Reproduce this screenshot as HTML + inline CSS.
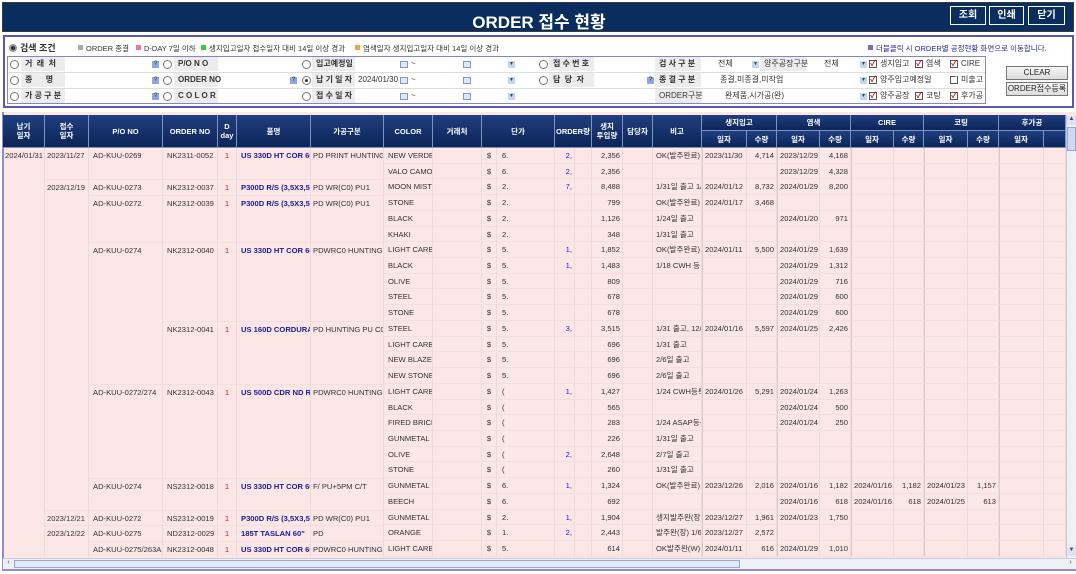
<!DOCTYPE html>
<html><head><meta charset="utf-8">
<style>
*{margin:0;padding:0;box-sizing:border-box}
body{width:1076px;height:574px;background:#fff;font-family:"Liberation Sans","Noto Sans CJK KR",sans-serif;position:relative;overflow:hidden;color:#333}
.a{position:absolute}
#title{left:2px;top:2px;width:1072px;height:30px;background:#0a2d60;border:1px solid #3a3a3a}
#title .t{left:0;width:1072px;top:5px;text-align:center;color:#fff;font-weight:bold;font-size:17px}
.btn{top:6px;height:19px;border:1px solid #fff;outline:1px solid #0a2d60;background:#0a2d60;color:#fff;font-size:10px;font-weight:bold;text-align:center;line-height:17px}
#sp{left:3px;top:35px;width:1071px;height:73px;border:2px solid #5a58b0}
.lg{font-size:7.5px;top:43px;color:#333;white-space:nowrap}
.sq{display:inline-block;width:5px;height:5px;margin-right:3px;vertical-align:1px}
#grid{left:7px;top:56px;width:979px;height:48px;border:1px solid #8684c8;background:#fff}
.lab{background:#ececec;font-size:8px;font-weight:bold;color:#333;height:14px;line-height:14px;padding-left:4px;white-space:nowrap}
.f{font-size:8px;color:#333;line-height:14px;white-space:nowrap}
.rad{width:9px;height:9px;border:1px solid #777;border-radius:50%;background:#fff}
.rad.on::after{content:"";position:absolute;left:2px;top:2px;width:3px;height:3px;border-radius:50%;background:#333}
.q{width:7px;height:7px;background:#8fa7e0;font-size:6px;color:#223;text-align:center;line-height:7px}
.cal{width:8px;height:7px;border:1px solid #7e97cf;background:#dfe8fa}
.dd{width:7px;height:7px;background:#c7d3ef;font-size:5px;line-height:7px;text-align:center;color:#345}
.cb{width:8px;height:8px;border:1px solid #555;background:#fff;font-size:8px;line-height:6px;color:#d01010;text-align:center;font-weight:bold}
.sbtn{left:1006px;width:62px;height:14px;border:1px solid #777;background:linear-gradient(#f6f6f6,#dcdcdc);font-size:8px;text-align:center;line-height:12px;color:#222}
#tbl{left:2px;top:112px;width:1074px;height:459px;border-left:2px solid #8f8cd0;border-bottom:1px solid #8f8cd0;background:#fde6e6}
.h{background:linear-gradient(#203f80,#0c2558);color:#fff;font-size:7.5px;font-weight:bold;text-align:center;display:flex;align-items:center;justify-content:center;border-right:1px solid #7f93c0;border-bottom:1px solid #7f93c0;line-height:9px}
#body{left:3px;top:148px;width:1063px;height:410px;overflow:hidden}
.r{display:flex;height:15.72px;font-size:7.6px;line-height:15px;white-space:nowrap}
.r>i{font-style:normal;overflow:hidden;border-right:1px solid #eedada;padding:0 2px;flex:none}
.r>i:nth-child(n+8){border-bottom:1px solid #f1e0e0}
.r>i:nth-child(1){width:42px}.r>i:nth-child(2){width:44px}.r>i:nth-child(3){width:74px;padding-left:4px}.r>i:nth-child(4){width:55px;padding-left:4px}
.r>i:nth-child(5){width:19px;color:#e01010;text-align:center}.r>i:nth-child(6){width:74px;color:#1b1b9a;font-weight:bold;padding-left:4px}
.r>i:nth-child(7){width:73px}.r>i:nth-child(8){width:49px;padding-left:4px}.r>i:nth-child(9){width:49px}
.r>i:nth-child(10){width:15px;text-align:center}.r>i:nth-child(11){width:58px;padding-left:5px}
.r>i:nth-child(12){width:20px;color:#2626c8;text-align:right}.r>i:nth-child(13){width:17px}
.r>i:nth-child(14){width:31px;text-align:right}.r>i:nth-child(15){width:30px}.r>i:nth-child(16){width:49px;padding-left:3px}
.r>i:nth-child(17){width:45px}.r>i:nth-child(18){width:30px;text-align:right}
.r>i:nth-child(19){width:43px;border-left:1px solid #dccaca}.r>i:nth-child(20){width:31px;text-align:right}
.r>i:nth-child(21){width:43px;border-left:1px solid #dccaca}.r>i:nth-child(22){width:30px;text-align:right}
.r>i:nth-child(23){width:44px;border-left:1px solid #dccaca}.r>i:nth-child(24){width:31px;text-align:right}
.r>i:nth-child(25){width:45px;border-left:1px solid #dccaca}.r>i:nth-child(26){width:22px}
.r>i:nth-child(17){border-left:1px solid #dccaca}
.s1>i:nth-child(n+2):nth-child(-n+7){border-top:1px solid #f1e0e0}
.s2>i:nth-child(n+3):nth-child(-n+7){border-top:1px solid #f1e0e0}
.s3>i:nth-child(n+4):nth-child(-n+7){border-top:1px solid #f1e0e0}
</style></head><body>

<div id="title" class="a"><div class="a t">ORDER 접수 현황</div></div>
<div class="a btn" style="left:950px;width:36px">조회</div>
<div class="a btn" style="left:989px;width:35px">인쇄</div>
<div class="a btn" style="left:1028px;width:37px">닫기</div>

<div id="sp" class="a"></div>
<div class="a lg" style="left:9px;top:41px;font-size:9px;font-weight:bold"><span style="display:inline-block;width:8px;height:8px;border-radius:50%;background:#333;border:2px solid #999;vertical-align:-1px;margin-right:3px"></span>검색 조건</div>
<div class="a lg" style="left:78px"><span class="sq" style="background:#aaa"></span>ORDER 종결</div>
<div class="a lg" style="left:136px"><span class="sq" style="background:#f070b0"></span>D-DAY 7일 이하</div>
<div class="a lg" style="left:201px"><span class="sq" style="background:#30d030"></span>생지입고일자 접수일자 대비 14일 이상 경과</div>
<div class="a lg" style="left:355px"><span class="sq" style="background:#f8a040"></span>염색일자 생지입고일자 대비 14일 이상 경과</div>
<div class="a lg" style="left:868px;color:#2a2aa0"><span class="sq" style="background:#7070c0"></span>더블클릭 시 ORDER별 공정현황 화면으로 이동합니다.</div>

<div id="grid" class="a"></div>
<div class="a" style="left:8px;top:72px;width:977px;height:1px;background:#ddd"></div>
<div class="a" style="left:8px;top:88px;width:977px;height:1px;background:#ddd"></div>
<!-- row1 -->
<div class="a rad" style="left:10px;top:60px"></div><div class="a lab" style="left:21px;top:57px;width:44px">거&nbsp;&nbsp;래&nbsp;&nbsp;처</div><div class="a q" style="left:152px;top:61px">?</div>
<div class="a rad" style="left:163px;top:60px"></div><div class="a lab" style="left:174px;top:57px;width:44px">P/O&nbsp;N&nbsp;O</div>
<div class="a rad" style="left:302px;top:60px"></div><div class="a lab" style="left:312px;top:57px;width:43px">입고예정일</div><div class="a cal" style="left:400px;top:61px"></div><div class="a f" style="left:411px;top:57px">~</div><div class="a cal" style="left:463px;top:61px"></div><div class="a dd" style="left:508px;top:61px">▼</div>
<div class="a rad" style="left:539px;top:60px"></div><div class="a lab" style="left:549px;top:57px;width:45px">접&nbsp;수&nbsp;번&nbsp;호</div>
<div class="a lab" style="left:655px;top:57px;width:46px">검&nbsp;사&nbsp;구&nbsp;분</div><div class="a f" style="left:718px;top:57px">전체</div><div class="a dd" style="left:752px;top:61px">▼</div>
<div class="a lab" style="left:760px;top:57px;width:46px;font-weight:normal">양주공장구분</div><div class="a f" style="left:824px;top:57px">전체</div><div class="a dd" style="left:860px;top:61px">▼</div>
<div class="a cb" style="left:869px;top:60px">✓</div><div class="a f" style="left:880px;top:57px">생지입고</div>
<div class="a cb" style="left:915px;top:60px">✓</div><div class="a f" style="left:926px;top:57px">염색</div>
<div class="a cb" style="left:950px;top:60px">✓</div><div class="a f" style="left:961px;top:57px">CIRE</div>
<!-- row2 -->
<div class="a rad" style="left:10px;top:76px"></div><div class="a lab" style="left:21px;top:73px;width:44px">종&nbsp;&nbsp;&nbsp;&nbsp;&nbsp;&nbsp;명</div><div class="a q" style="left:152px;top:77px">?</div>
<div class="a rad" style="left:163px;top:76px"></div><div class="a lab" style="left:174px;top:73px;width:44px">ORDER NO</div><div class="a q" style="left:290px;top:77px">?</div>
<div class="a rad on" style="left:302px;top:76px"></div><div class="a lab" style="left:312px;top:73px;width:43px">납&nbsp;기&nbsp;일&nbsp;자</div><div class="a f" style="left:358px;top:73px">2024/01/30</div><div class="a cal" style="left:400px;top:77px"></div><div class="a f" style="left:411px;top:73px">~</div><div class="a cal" style="left:463px;top:77px"></div><div class="a dd" style="left:508px;top:77px">▼</div>
<div class="a rad" style="left:539px;top:76px"></div><div class="a lab" style="left:549px;top:73px;width:45px">담&nbsp;&nbsp;당&nbsp;&nbsp;자</div><div class="a q" style="left:647px;top:77px">?</div>
<div class="a lab" style="left:655px;top:73px;width:46px">종&nbsp;결&nbsp;구&nbsp;분</div><div class="a f" style="left:720px;top:73px">종결,미종결,미작업</div><div class="a dd" style="left:860px;top:77px">▼</div>
<div class="a cb" style="left:869px;top:76px">✓</div><div class="a f" style="left:880px;top:73px">양주입고예정일</div>
<div class="a cb" style="left:950px;top:76px;color:#fff">✓</div><div class="a f" style="left:961px;top:73px">미출고</div>
<!-- row3 -->
<div class="a rad" style="left:10px;top:92px"></div><div class="a lab" style="left:21px;top:89px;width:44px">가&nbsp;공&nbsp;구&nbsp;분</div><div class="a q" style="left:152px;top:93px">?</div>
<div class="a rad" style="left:163px;top:92px"></div><div class="a lab" style="left:174px;top:89px;width:44px">C&nbsp;O&nbsp;L&nbsp;O&nbsp;R</div>
<div class="a rad" style="left:302px;top:92px"></div><div class="a lab" style="left:312px;top:89px;width:43px">접&nbsp;수&nbsp;일&nbsp;자</div><div class="a cal" style="left:400px;top:93px"></div><div class="a f" style="left:411px;top:89px">~</div><div class="a cal" style="left:463px;top:93px"></div><div class="a dd" style="left:508px;top:93px">▼</div>
<div class="a lab" style="left:655px;top:89px;width:46px;font-weight:normal">ORDER구분</div><div class="a f" style="left:725px;top:89px">완제품,시가공(완)</div><div class="a dd" style="left:860px;top:93px">▼</div>
<div class="a cb" style="left:869px;top:92px">✓</div><div class="a f" style="left:880px;top:89px">양주공장</div>
<div class="a cb" style="left:915px;top:92px">✓</div><div class="a f" style="left:926px;top:89px">코팅</div>
<div class="a cb" style="left:950px;top:92px">✓</div><div class="a f" style="left:961px;top:89px">후가공</div>

<div class="a sbtn" style="top:66px">CLEAR</div>
<div class="a sbtn" style="top:82px">ORDER접수등록</div>

<div id="tbl" class="a"></div>
<!-- header -->
<div class="a h" style="left:3px;top:115px;width:42px;height:33px">납기<br>일자</div>
<div class="a h" style="left:45px;top:115px;width:44px;height:33px">접수<br>일자</div>
<div class="a h" style="left:89px;top:115px;width:74px;height:33px">P/O NO</div>
<div class="a h" style="left:163px;top:115px;width:55px;height:33px">ORDER NO</div>
<div class="a h" style="left:218px;top:115px;width:19px;height:33px">D<br>day</div>
<div class="a h" style="left:237px;top:115px;width:74px;height:33px">품명</div>
<div class="a h" style="left:311px;top:115px;width:73px;height:33px">가공구분</div>
<div class="a h" style="left:384px;top:115px;width:49px;height:33px">COLOR</div>
<div class="a h" style="left:433px;top:115px;width:49px;height:33px">거래처</div>
<div class="a h" style="left:482px;top:115px;width:73px;height:33px">단가</div>
<div class="a h" style="left:555px;top:115px;width:37px;height:33px">ORDER량</div>
<div class="a h" style="left:592px;top:115px;width:31px;height:33px">생지<br>투입량</div>
<div class="a h" style="left:623px;top:115px;width:30px;height:33px">담당자</div>
<div class="a h" style="left:653px;top:115px;width:49px;height:33px">비고</div>
<div class="a h" style="left:702px;top:115px;width:75px;height:16px">생지입고</div>
<div class="a h" style="left:777px;top:115px;width:74px;height:16px">염색</div>
<div class="a h" style="left:851px;top:115px;width:73px;height:16px">CIRE</div>
<div class="a h" style="left:924px;top:115px;width:75px;height:16px">코팅</div>
<div class="a h" style="left:999px;top:115px;width:67px;height:16px">후가공</div>
<div class="a h" style="left:702px;top:131px;width:45px;height:17px">일자</div>
<div class="a h" style="left:747px;top:131px;width:30px;height:17px">수량</div>
<div class="a h" style="left:777px;top:131px;width:43px;height:17px">일자</div>
<div class="a h" style="left:820px;top:131px;width:31px;height:17px">수량</div>
<div class="a h" style="left:851px;top:131px;width:43px;height:17px">일자</div>
<div class="a h" style="left:894px;top:131px;width:30px;height:17px">수량</div>
<div class="a h" style="left:924px;top:131px;width:44px;height:17px">일자</div>
<div class="a h" style="left:968px;top:131px;width:31px;height:17px">수량</div>
<div class="a h" style="left:999px;top:131px;width:45px;height:17px">일자</div>
<div class="a h" style="left:1044px;top:131px;width:22px;height:17px"></div>

<div id="body" class="a">
<div class="r"><i>2024/01/31</i><i>2023/11/27</i><i>AD-KUU-0269</i><i>NK2311-0052</i><i>1</i><i>US 330D HT COR 60"</i><i>PD PRINT HUNTING I</i><i>NEW VERDE 2</i><i></i><i>$</i><i>6.</i><i>2,</i><i></i><i>2,356</i><i></i><i>OK(발주완료)</i><i>2023/11/30</i><i>4,714</i><i>2023/12/29</i><i>4,168</i><i></i><i></i><i></i><i></i><i></i><i></i></div>
<div class="r"><i></i><i></i><i></i><i></i><i></i><i></i><i></i><i>VALO CAMO</i><i></i><i>$</i><i>6.</i><i>2,</i><i></i><i>2,356</i><i></i><i></i><i></i><i></i><i>2023/12/29</i><i>4,328</i><i></i><i></i><i></i><i></i><i></i><i></i></div>
<div class="r s1"><i></i><i>2023/12/19</i><i>AD-KUU-0273</i><i>NK2312-0037</i><i>1</i><i>P300D R/S (3,5X3,5)</i><i>PD WR(C0) PU1</i><i>MOON MIST</i><i></i><i>$</i><i>2.</i><i>7,</i><i></i><i>8,488</i><i></i><i>1/31일 출고 1/</i><i>2024/01/12</i><i>8,732</i><i>2024/01/29</i><i>8,200</i><i></i><i></i><i></i><i></i><i></i><i></i></div>
<div class="r s2"><i></i><i></i><i>AD-KUU-0272</i><i>NK2312-0039</i><i>1</i><i>P300D R/S (3,5X3,5)</i><i>PD WR(C0) PU1</i><i>STONE</i><i></i><i>$</i><i>2.</i><i></i><i></i><i>799</i><i></i><i>OK(발주완료)</i><i>2024/01/17</i><i>3,468</i><i></i><i></i><i></i><i></i><i></i><i></i><i></i><i></i></div>
<div class="r"><i></i><i></i><i></i><i></i><i></i><i></i><i></i><i>BLACK</i><i></i><i>$</i><i>2.</i><i></i><i></i><i>1,126</i><i></i><i>1/24일 출고</i><i></i><i></i><i>2024/01/20</i><i>971</i><i></i><i></i><i></i><i></i><i></i><i></i></div>
<div class="r"><i></i><i></i><i></i><i></i><i></i><i></i><i></i><i>KHAKI</i><i></i><i>$</i><i>2.</i><i></i><i></i><i>348</i><i></i><i>1/31일 출고</i><i></i><i></i><i></i><i></i><i></i><i></i><i></i><i></i><i></i><i></i></div>
<div class="r s2"><i></i><i></i><i>AD-KUU-0274</i><i>NK2312-0040</i><i>1</i><i>US 330D HT COR 60"</i><i>PDWRC0 HUNTING</i><i>LIGHT CARBC</i><i></i><i>$</i><i>5.</i><i>1,</i><i></i><i>1,852</i><i></i><i>OK(발주완료)</i><i>2024/01/11</i><i>5,500</i><i>2024/01/29</i><i>1,639</i><i></i><i></i><i></i><i></i><i></i><i></i></div>
<div class="r"><i></i><i></i><i></i><i></i><i></i><i></i><i></i><i>BLACK</i><i></i><i>$</i><i>5.</i><i>1,</i><i></i><i>1,483</i><i></i><i>1/18 CWH 등</i><i></i><i></i><i>2024/01/29</i><i>1,312</i><i></i><i></i><i></i><i></i><i></i><i></i></div>
<div class="r"><i></i><i></i><i></i><i></i><i></i><i></i><i></i><i>OLIVE</i><i></i><i>$</i><i>5.</i><i></i><i></i><i>809</i><i></i><i></i><i></i><i></i><i>2024/01/29</i><i>716</i><i></i><i></i><i></i><i></i><i></i><i></i></div>
<div class="r"><i></i><i></i><i></i><i></i><i></i><i></i><i></i><i>STEEL</i><i></i><i>$</i><i>5.</i><i></i><i></i><i>678</i><i></i><i></i><i></i><i></i><i>2024/01/29</i><i>600</i><i></i><i></i><i></i><i></i><i></i><i></i></div>
<div class="r"><i></i><i></i><i></i><i></i><i></i><i></i><i></i><i>STONE</i><i></i><i>$</i><i>5.</i><i></i><i></i><i>678</i><i></i><i></i><i></i><i></i><i>2024/01/29</i><i>600</i><i></i><i></i><i></i><i></i><i></i><i></i></div>
<div class="r s3"><i></i><i></i><i></i><i>NK2312-0041</i><i>1</i><i>US 160D CORDURA I</i><i>PD HUNTING PU C0</i><i>STEEL</i><i></i><i>$</i><i>5.</i><i>3,</i><i></i><i>3,515</i><i></i><i>1/31 출고, 12/</i><i>2024/01/16</i><i>5,597</i><i>2024/01/25</i><i>2,426</i><i></i><i></i><i></i><i></i><i></i><i></i></div>
<div class="r"><i></i><i></i><i></i><i></i><i></i><i></i><i></i><i>LIGHT CARBC</i><i></i><i>$</i><i>5.</i><i></i><i></i><i>696</i><i></i><i>1/31 출고</i><i></i><i></i><i></i><i></i><i></i><i></i><i></i><i></i><i></i><i></i></div>
<div class="r"><i></i><i></i><i></i><i></i><i></i><i></i><i></i><i>NEW BLAZE C</i><i></i><i>$</i><i>5.</i><i></i><i></i><i>696</i><i></i><i>2/6일 출고</i><i></i><i></i><i></i><i></i><i></i><i></i><i></i><i></i><i></i><i></i></div>
<div class="r"><i></i><i></i><i></i><i></i><i></i><i></i><i></i><i>NEW STONE</i><i></i><i>$</i><i>5.</i><i></i><i></i><i>696</i><i></i><i>2/6일 출고</i><i></i><i></i><i></i><i></i><i></i><i></i><i></i><i></i><i></i><i></i></div>
<div class="r s2"><i></i><i></i><i>AD-KUU-0272/274</i><i>NK2312-0043</i><i>1</i><i>US 500D CDR ND R/S</i><i>PDWRC0 HUNTING</i><i>LIGHT CARBC</i><i></i><i>$</i><i>(</i><i>1,</i><i></i><i>1,427</i><i></i><i>1/24 CWH등록</i><i>2024/01/26</i><i>5,291</i><i>2024/01/24</i><i>1,263</i><i></i><i></i><i></i><i></i><i></i><i></i></div>
<div class="r"><i></i><i></i><i></i><i></i><i></i><i></i><i></i><i>BLACK</i><i></i><i>$</i><i>(</i><i></i><i></i><i>565</i><i></i><i></i><i></i><i></i><i>2024/01/24</i><i>500</i><i></i><i></i><i></i><i></i><i></i><i></i></div>
<div class="r"><i></i><i></i><i></i><i></i><i></i><i></i><i></i><i>FIRED BRICK</i><i></i><i>$</i><i>(</i><i></i><i></i><i>283</i><i></i><i>1/24 ASAP등록</i><i></i><i></i><i>2024/01/24</i><i>250</i><i></i><i></i><i></i><i></i><i></i><i></i></div>
<div class="r"><i></i><i></i><i></i><i></i><i></i><i></i><i></i><i>GUNMETAL</i><i></i><i>$</i><i>(</i><i></i><i></i><i>226</i><i></i><i>1/31일 출고</i><i></i><i></i><i></i><i></i><i></i><i></i><i></i><i></i><i></i><i></i></div>
<div class="r"><i></i><i></i><i></i><i></i><i></i><i></i><i></i><i>OLIVE</i><i></i><i>$</i><i>(</i><i>2,</i><i></i><i>2,648</i><i></i><i>2/7일 출고</i><i></i><i></i><i></i><i></i><i></i><i></i><i></i><i></i><i></i><i></i></div>
<div class="r"><i></i><i></i><i></i><i></i><i></i><i></i><i></i><i>STONE</i><i></i><i>$</i><i>(</i><i></i><i></i><i>260</i><i></i><i>1/31일 출고</i><i></i><i></i><i></i><i></i><i></i><i></i><i></i><i></i><i></i><i></i></div>
<div class="r s2"><i></i><i></i><i>AD-KUU-0274</i><i>NS2312-0018</i><i>1</i><i>US 330D HT COR 60"</i><i>F/ PU+5PM C/T</i><i>GUNMETAL</i><i></i><i>$</i><i>6.</i><i>1,</i><i></i><i>1,324</i><i></i><i>OK(발주완료)</i><i>2023/12/26</i><i>2,016</i><i>2024/01/16</i><i>1,182</i><i>2024/01/16</i><i>1,182</i><i>2024/01/23</i><i>1,157</i><i></i><i></i></div>
<div class="r"><i></i><i></i><i></i><i></i><i></i><i></i><i></i><i>BEECH</i><i></i><i>$</i><i>6.</i><i></i><i></i><i>692</i><i></i><i></i><i></i><i></i><i>2024/01/16</i><i>618</i><i>2024/01/16</i><i>618</i><i>2024/01/25</i><i>613</i><i></i><i></i></div>
<div class="r s1"><i></i><i>2023/12/21</i><i>AD-KUU-0272</i><i>NS2312-0019</i><i>1</i><i>P300D R/S (3,5X3,5)</i><i>PD WR(C0) PU1</i><i>GUNMETAL</i><i></i><i>$</i><i>2.</i><i>1,</i><i></i><i>1,904</i><i></i><i>생지발주완(장)</i><i>2023/12/27</i><i>1,961</i><i>2024/01/23</i><i>1,750</i><i></i><i></i><i></i><i></i><i></i><i></i></div>
<div class="r s1"><i></i><i>2023/12/22</i><i>AD-KUU-0275</i><i>ND2312-0029</i><i>1</i><i>185T TASLAN 60"</i><i>PD</i><i>ORANGE</i><i></i><i>$</i><i>1.</i><i>2,</i><i></i><i>2,443</i><i></i><i>발주완(장) 1/6</i><i>2023/12/27</i><i>2,572</i><i></i><i></i><i></i><i></i><i></i><i></i><i></i><i></i></div>
<div class="r s2"><i></i><i></i><i>AD-KUU-0275/263A</i><i>NK2312-0048</i><i>1</i><i>US 330D HT COR 60"</i><i>PDWRC0 HUNTING</i><i>LIGHT CARBC</i><i></i><i>$</i><i>5.</i><i></i><i></i><i>614</i><i></i><i>OK발주완(W)</i><i>2024/01/11</i><i>616</i><i>2024/01/29</i><i>1,010</i><i></i><i></i><i></i><i></i><i></i><i></i></div>
</div>

<!-- scrollbars -->
<div class="a" style="left:1066px;top:115px;width:10px;height:443px;background:#eef0f6;border-left:1px solid #c8cce0"></div>
<div class="a" style="left:1067px;top:116px;width:9px;height:9px;background:#dde3f3;font-size:6px;text-align:center;color:#446">▲</div>
<div class="a" style="left:1067px;top:127px;width:9px;height:24px;background:#cfd8ef;border:1px solid #9aa6cc"></div>
<div class="a" style="left:1067px;top:547px;width:9px;height:9px;background:#dde3f3;font-size:6px;text-align:center;color:#446">▼</div>
<div class="a" style="left:3px;top:558px;width:1073px;height:12px;background:#eef0f6;border-top:1px solid #c8cce0;border-bottom:1px solid #8f8cd0"></div>
<div class="a" style="left:4px;top:559px;width:9px;height:10px;font-size:7px;color:#446;text-align:center">‹</div>
<div class="a" style="left:14px;top:560px;width:726px;height:8px;background:#e3e8f6;border:1px solid #9aa6cc"></div>
<div class="a" style="left:1066px;top:559px;width:9px;height:10px;font-size:7px;color:#446;text-align:center">›</div>
</body></html>
